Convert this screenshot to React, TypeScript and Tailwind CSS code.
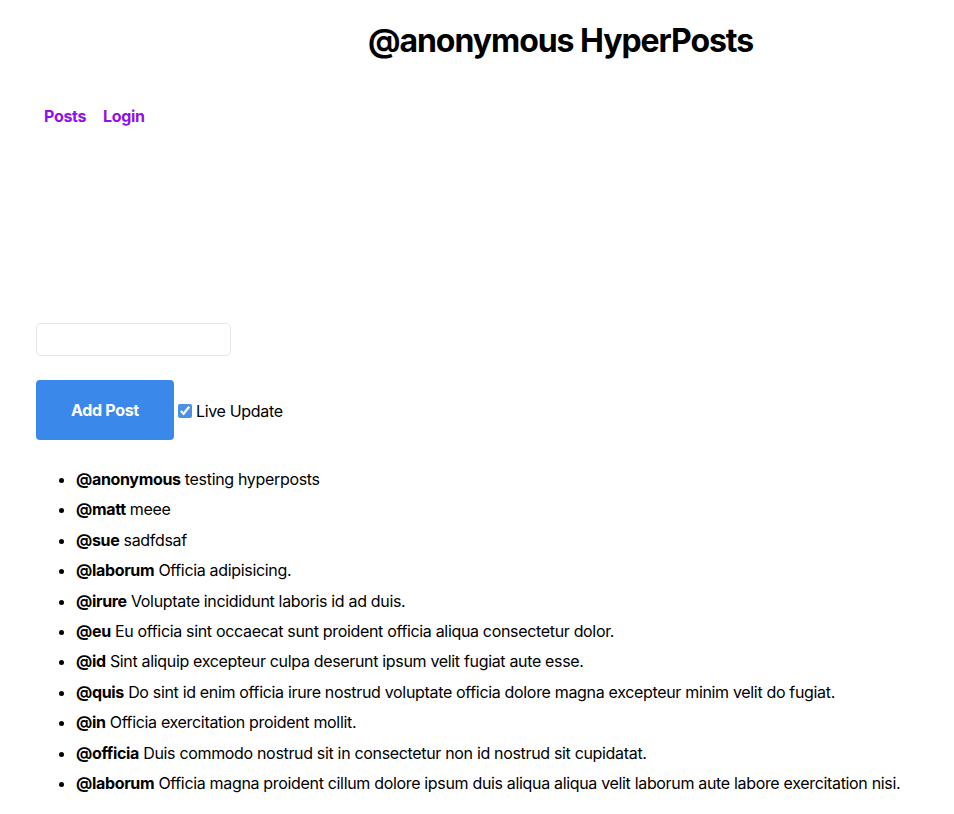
import { useState } from 'react';

const posts = [
  { user: 'anonymous', text: 'testing hyperposts' },
  { user: 'matt', text: 'meee' },
  { user: 'sue', text: 'sadfdsaf' },
  { user: 'laborum', text: 'Officia adipisicing.' },
  { user: 'irure', text: 'Voluptate incididunt laboris id ad duis.' },
  { user: 'eu', text: 'Eu officia sint occaecat sunt proident officia aliqua consectetur dolor.' },
  { user: 'id', text: 'Sint aliquip excepteur culpa deserunt ipsum velit fugiat aute esse.' },
  { user: 'quis', text: 'Do sint id enim officia irure nostrud voluptate officia dolore magna excepteur minim velit do fugiat.' },
  { user: 'in', text: 'Officia exercitation proident mollit.' },
  { user: 'officia', text: 'Duis commodo nostrud sit in consectetur non id nostrud sit cupidatat.' },
  { user: 'laborum', text: 'Officia magna proident cillum dolore ipsum duis aliqua aliqua velit laborum aute labore exercitation nisi.' },
];

export default function App() {
  const [live, setLive] = useState(true);

  return (
    <div className="min-h-[814px] bg-white font-['Inter',sans-serif] tracking-[-0.33px] text-black">
      {/* Header */}
      <header className="pt-[22px]">
        <h1 className="ml-[368px] text-[32px] font-bold leading-[38px] tracking-[-1.05px]">
          @anonymous HyperPosts
        </h1>
      </header>

      {/* Nav */}
      <nav className="mt-[44px] flex gap-[1px] px-[36px]">
        <a href="#" className="px-2 text-base font-bold leading-6 text-[#8f0fef]">
          Posts
        </a>
        <a href="#" className="px-2 text-base font-bold leading-6 text-[#8f0fef]">
          Login
        </a>
      </nav>

      <main className="px-[36px] pt-[195px]">
        <input
          type="text"
          className="block h-[33px] w-[195px] rounded-[5px] border border-[#e6e6e6] px-2 text-base outline-none"
        />

        <div className="mt-[24px] flex items-center">
          <button className="h-[60px] w-[138px] rounded-[4px] bg-[#3b88eb] text-base font-bold text-white">
            Add Post
          </button>
          <label className="ml-[4px] flex items-center gap-[4px] pt-[2px] text-base">
            <input
              type="checkbox"
              checked={live}
              onChange={(e) => setLive(e.target.checked)}
              className="h-[14px] w-[14px] accent-[#4a90e8]"
            />
            Live Update
          </label>
        </div>

        <ul className="mt-[24px] list-disc pl-[40px] text-base">
          {posts.map((p, i) => (
            <li key={i} className="leading-[30.4px]">
              <span className="font-bold">@{p.user}</span> {p.text}
            </li>
          ))}
        </ul>
      </main>
    </div>
  );
}
